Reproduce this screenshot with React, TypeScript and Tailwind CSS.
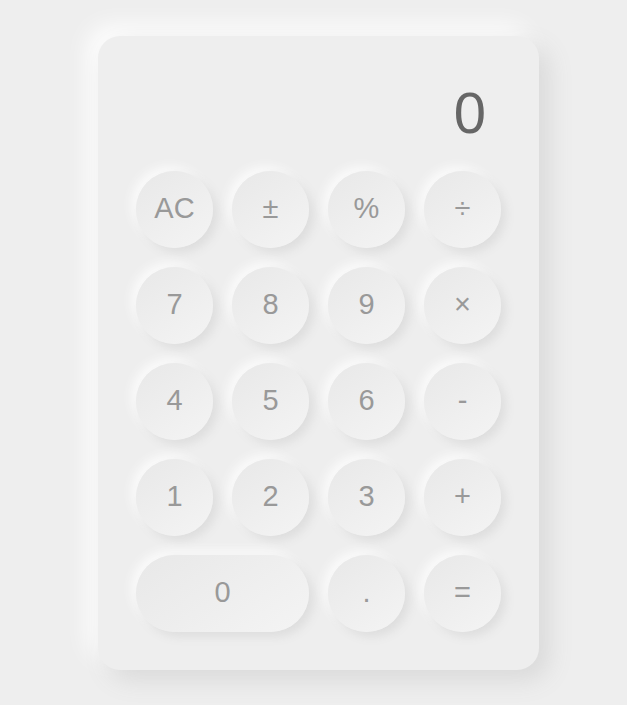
import React from "react"

const keys: { label: string; wide?: boolean }[] = [
  { label: "AC" }, { label: "±" }, { label: "%" }, { label: "÷" },
  { label: "7" }, { label: "8" }, { label: "9" }, { label: "×" },
  { label: "4" }, { label: "5" }, { label: "6" }, { label: "-" },
  { label: "1" }, { label: "2" }, { label: "3" }, { label: "+" },
  { label: "0", wide: true }, { label: "." }, { label: "=" },
]

export default function App() {
  return (
    <div
      className="min-h-[705px] bg-[#eeeeee] flex items-center justify-center pl-[10px]"
      style={{ fontFamily: '"Liberation Sans", Arial, sans-serif' }}
    >
      {/* 本体 */}
      <div className="w-[441px] h-[634px] rounded-[22px] bg-[#eeeeee] px-[38px] pt-[38px] shadow-[10px_10px_24px_#d9d9d9,-10px_-10px_24px_#ffffff]">
        {/* 表示 */}
        <div className="h-[97px] flex items-start justify-end pr-[15px] pt-[10px]">
          <span className="text-[58px] leading-none text-[#666666]">0</span>
        </div>

        {/* キー */}
        <div className="grid grid-cols-4 gap-[19px]">
          {keys.map((k) => (
            <button
              key={k.label}
              className={`${k.wide ? "col-span-2" : ""} h-[77px] rounded-full flex items-center justify-center text-[29px] text-[#999999] bg-[linear-gradient(145deg,#e8e8e8,#f4f4f4)] shadow-[5px_5px_10px_#dedede,-5px_-5px_10px_#fafafa]`}
            >
              {k.label}
            </button>
          ))}
        </div>
      </div>
    </div>
  )
}
